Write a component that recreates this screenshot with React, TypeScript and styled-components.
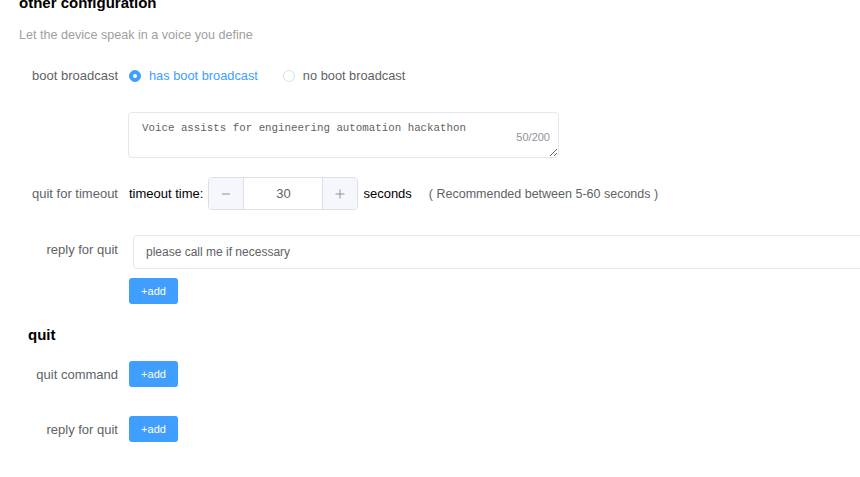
import React from "react";
import styled, { createGlobalStyle } from "styled-components";

const Global = createGlobalStyle`
  html, body { margin: 0; padding: 0; background: #fff; overflow: hidden; }
  body { font-family: "Liberation Sans", Arial, sans-serif; }
`;

const Page = styled.div`
  padding: 0 0 0 19px;
  width: 860px;
  height: 477px;
  box-sizing: border-box;
  overflow: hidden;
  display: flex;
  flex-direction: column;
`;

const Title = styled.h2<{ $top: number; $indent?: number }>`
  margin: ${(p) => p.$top}px 0 0 ${(p) => p.$indent ?? 0}px;
  font-size: 15px;
  line-height: 20px;
  font-weight: bold;
  color: #000;
`;

const Subtitle = styled.p`
  margin: 12px 0 0;
  font-size: 12.6px;
  line-height: 20px;
  color: #a0a0a0;
`;

const Row = styled.div<{ $top: number; $align?: string }>`
  display: flex;
  align-items: ${(p) => p.$align ?? "center"};
  margin-top: ${(p) => p.$top}px;
`;

const Label = styled.label<{ $lh?: number }>`
  width: 109px;
  flex: none;
  box-sizing: border-box;
  padding-right: 10px;
  text-align: right;
  font-size: 13px;
  line-height: ${(p) => p.$lh ?? 20}px;
  color: #606266;
  white-space: nowrap;
`;

const Content = styled.div`
  display: flex;
  align-items: center;
  flex: 1;
  min-width: 0;
`;

const RadioItem = styled.span<{ $checked?: boolean }>`
  display: inline-flex;
  align-items: center;
  margin-left: 1px;
  margin-right: 24px;
  font-size: 12.8px;
  line-height: 20px;
  color: ${(p) => (p.$checked ? "#409eff" : "#606266")};
  white-space: nowrap;
`;

const RadioDot = styled.span<{ $checked?: boolean }>`
  width: 12px;
  height: 12px;
  box-sizing: border-box;
  border-radius: 50%;
  margin-right: 8px;
  border: 1px solid ${(p) => (p.$checked ? "#409eff" : "#dcdfe6")};
  background: ${(p) => (p.$checked ? "#409eff" : "#fff")};
  display: inline-flex;
  align-items: center;
  justify-content: center;
  &::after {
    content: "";
    width: 4px;
    height: 4px;
    border-radius: 50%;
    background: #fff;
    display: ${(p) => (p.$checked ? "block" : "none")};
  }
`;

const TextareaWrap = styled.div`
  position: relative;
  margin-left: 109px;
  width: 431px;
  height: 46px;
`;

const TextArea = styled.textarea`
  width: 100%;
  height: 100%;
  box-sizing: border-box;
  border: 1px solid #e4e7ed;
  border-radius: 4px;
  padding: 7px 13px;
  font-family: "Liberation Mono", "DejaVu Sans Mono", monospace;
  font-size: 10.8px;
  line-height: 16px;
  color: #606266;
  resize: both;
  outline: none;
  display: block;
`;

const Counter = styled.span`
  position: absolute;
  right: 9px;
  bottom: 14px;
  font-size: 11px;
  line-height: 13px;
  color: #909399;
`;

const PlainText = styled.span<{ $ml?: number; $mr?: number; $color?: string; $size?: number }>`
  font-size: ${(p) => p.$size ?? 13}px;
  line-height: 20px;
  color: ${(p) => p.$color ?? "#000"};
  margin-left: ${(p) => p.$ml ?? 0}px;
  margin-right: ${(p) => p.$mr ?? 0}px;
  white-space: nowrap;
`;

const Stepper = styled.div`
  display: flex;
  width: 150px;
  height: 33px;
  box-sizing: border-box;
  border: 1px solid #dcdfe6;
  border-radius: 4px;
  overflow: hidden;
`;

const StepButton = styled.span<{ $side: "left" | "right" }>`
  width: 34px;
  flex: none;
  background: #f5f7fa;
  display: flex;
  align-items: center;
  justify-content: center;
  ${(p) => (p.$side === "left" ? "border-right" : "border-left")}: 1px solid #dcdfe6;
`;

const StepValue = styled.span`
  flex: 1;
  display: flex;
  align-items: center;
  justify-content: center;
  font-size: 13px;
  color: #606266;
`;

const TextInput = styled.div`
  flex: none;
  margin-left: 5px;
  width: 760px;
  height: 34px;
  box-sizing: border-box;
  border: 1px solid #e4e7ed;
  border-radius: 4px;
  padding-left: 12px;
  display: flex;
  align-items: center;
  font-size: 12px;
  color: #606266;
  white-space: nowrap;
`;

const AddButton = styled.button<{ $ml?: number }>`
  margin-left: ${(p) => p.$ml ?? 0}px;
  width: 49px;
  height: 26px;
  border: none;
  border-radius: 3px;
  background: #409eff;
  color: #fff;
  font-family: "Liberation Sans", Arial, sans-serif;
  font-size: 11px;
  padding: 0;
  display: flex;
  align-items: center;
  justify-content: center;
`;

const Minus = () => (
  <svg width="10" height="10" viewBox="0 0 10 10">
    <line x1="1" y1="5" x2="9" y2="5" stroke="#909399" strokeWidth="1" />
  </svg>
);

const Plus = () => (
  <svg width="10" height="10" viewBox="0 0 10 10">
    <line x1="0.5" y1="5" x2="9.5" y2="5" stroke="#909399" strokeWidth="1" />
    <line x1="5" y1="0.5" x2="5" y2="9.5" stroke="#909399" strokeWidth="1" />
  </svg>
);

export default function App() {
  return (
    <>
      <Global />
      <Page>
        <Title $top={-7}>other configuration</Title>
        <Subtitle>Let the device speak in a voice you define</Subtitle>

        <Row $top={21}>
          <Label>boot broadcast</Label>
          <Content>
            <RadioItem $checked>
              <RadioDot $checked />
              has boot broadcast
            </RadioItem>
            <RadioItem>
              <RadioDot />
              no boot broadcast
            </RadioItem>
          </Content>
        </Row>

        <Row $top={26}>
          <TextareaWrap>
            <TextArea defaultValue="Voice assists for engineering automation hackathon" />
            <Counter>50/200</Counter>
          </TextareaWrap>
        </Row>

        <Row $top={19}>
          <Label>quit for timeout</Label>
          <Content>
            <PlainText $ml={1} $mr={5}>timeout time:</PlainText>
            <Stepper>
              <StepButton $side="left">
                <Minus />
              </StepButton>
              <StepValue>30</StepValue>
              <StepButton $side="right">
                <Plus />
              </StepButton>
            </Stepper>
            <PlainText $ml={5}>seconds</PlainText>
            <PlainText $ml={17} $color="#606266" $size={12.5}>
              ( Recommended between 5-60 seconds )
            </PlainText>
          </Content>
        </Row>

        <Row $top={25} $align="flex-start">
          <Label $lh={30}>reply for quit</Label>
          <Content>
            <TextInput>please call me if necessary</TextInput>
          </Content>
        </Row>

        <Row $top={9}>
          <AddButton $ml={110}>+add</AddButton>
        </Row>

        <Title $top={21} $indent={9}>quit</Title>

        <Row $top={16} $align="flex-start">
          <Label $lh={28}>quit command</Label>
          <Content>
            <AddButton $ml={1}>+add</AddButton>
          </Content>
        </Row>

        <Row $top={27} $align="flex-start">
          <Label $lh={28}>reply for quit</Label>
          <Content>
            <AddButton $ml={1}>+add</AddButton>
          </Content>
        </Row>
      </Page>
    </>
  );
}
